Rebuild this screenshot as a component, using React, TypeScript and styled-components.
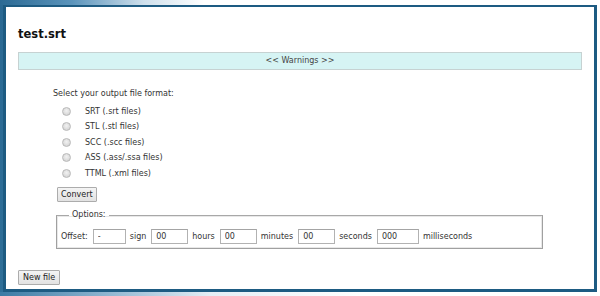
import styled, { createGlobalStyle } from 'styled-components';

const GlobalStyle = createGlobalStyle`
  html, body {
    margin: 0;
    padding: 0;
    background: #ffffff;
  }
  * {
    box-sizing: border-box;
  }
`;

const formats = [
  'SRT (.srt files)',
  'STL (.stl files)',
  'SCC (.scc files)',
  'ASS (.ass/.ssa files)',
  'TTML (.xml files)',
];

const offsets = [
  { value: '-', unit: 'sign', width: 33 },
  { value: '00', unit: 'hours', width: 37 },
  { value: '00', unit: 'minutes', width: 37 },
  { value: '00', unit: 'seconds', width: 37 },
  { value: '000', unit: 'milliseconds', width: 42 },
];

const App = () => {
  return (
    <>
      <GlobalStyle />
      <S.Page>
        <S.Panel>
          <S.Title>test.srt</S.Title>
          <S.Warnings>&lt;&lt; Warnings &gt;&gt;</S.Warnings>
          <S.Section>
            <S.Prompt>Select your output file format:</S.Prompt>
            <S.FormatList>
              {formats.map((f) => (
                <S.FormatRow key={f}>
                  <S.Radio type="radio" name="format" />
                  <S.FormatLabel>{f}</S.FormatLabel>
                </S.FormatRow>
              ))}
            </S.FormatList>
            <S.Button>Convert</S.Button>
            <S.Options>
              <S.Legend>Options:</S.Legend>
              <S.OffsetRow>
                <S.Label>Offset:</S.Label>
                {offsets.map((o) => (
                  <S.OffsetItem key={o.unit}>
                    <S.Input $width={o.width} defaultValue={o.value} />
                    <S.Label>{o.unit}</S.Label>
                  </S.OffsetItem>
                ))}
              </S.OffsetRow>
            </S.Options>
          </S.Section>
          <S.NewFile>New file</S.NewFile>
        </S.Panel>
      </S.Page>
    </>
  );
};

export default App;

const S = {
  Page: styled.div`
    width: 600px;
    height: 296px;
    padding: 5px 3px 4px 3px;
    background:
      linear-gradient(90deg, #2b6a94 0%, #5b94bb 12%, #cfe0ec 24%, #ffffff 34%) 0 0 / 100% 5px no-repeat,
      linear-gradient(90deg, #3b7aa4 0%, #8fb6d1 18%, #e4eef5 35%, #ffffff 60%) 0 292px / 100% 4px no-repeat,
      linear-gradient(#2a6993, #2f6f98) 0 0 / 3px 100% no-repeat,
      #ffffff;
  `,

  Panel: styled.div`
    width: 594px;
    height: 287px;
    border: 3px solid #1d5b82;
    border-top-width: 2px;
    background: #ffffff;
    padding: 0 12px;
    display: flex;
    flex-direction: column;
    font-family: 'DejaVu Sans', Verdana, sans-serif;
    font-size: 8px;
    color: #3a3a3a;
  `,

  Title: styled.h1`
    margin: 20px 0 0 0;
    font-size: 11.5px;
    line-height: 14px;
    font-weight: bold;
    color: #111111;
  `,

  Warnings: styled.div`
    margin-top: 11px;
    height: 18px;
    background: #d6f4f4;
    border: 1px solid #c6d2d2;
    text-align: center;
    line-height: 16px;
    color: #444444;
  `,

  Section: styled.div`
    padding-left: 35px;
    display: flex;
    flex-direction: column;
    align-items: flex-start;
  `,

  Prompt: styled.div`
    margin-top: 18px;
    line-height: 12px;
    color: #333333;
  `,

  FormatList: styled.div`
    margin-top: 3.5px;
    padding-left: 9px;
    display: flex;
    flex-direction: column;
  `,

  FormatRow: styled.label`
    height: 15.5px;
    display: flex;
    align-items: center;
  `,

  Radio: styled.input`
    appearance: none;
    margin: 0 14px 0 0;
    width: 9px;
    height: 9px;
    border-radius: 50%;
    border: 1px solid #b9b9b9;
    background: radial-gradient(circle at 50% 40%, #f2f2f2 0%, #d8d8d8 70%, #c9c9c9 100%);
  `,

  FormatLabel: styled.span`
    color: #333333;
  `,

  Button: styled.button`
    margin-top: 6px;
    margin-left: 4px;
    height: 15px;
    padding: 0 3px;
    border: 1px solid #acacac;
    border-radius: 1px;
    background: linear-gradient(#f4f4f4, #e2e2e2);
    font-family: 'DejaVu Sans', Verdana, sans-serif;
    font-size: 8px;
    line-height: 12px;
    color: #222222;
  `,

  Options: styled.fieldset`
    margin: 8px 0 0 3px;
    width: 487px;
    padding: 9px 4px 4px 4px;
    border: 1px solid #a0a0a0;
    border-top-color: #a8a8a8;
    box-shadow: inset 0 0 0 1px #e8e8e8;
  `,

  Legend: styled.legend`
    margin-left: 8px;
    padding: 0 3px;
    line-height: 10px;
    color: #333333;
  `,

  OffsetRow: styled.div`
    display: flex;
    align-items: center;
    height: 15px;
  `,

  OffsetItem: styled.div`
    display: flex;
    align-items: center;
    margin-left: 5px;
    gap: 4px;
  `,

  Label: styled.span`
    color: #333333;
  `,

  Input: styled.input<{ $width: number }>`
    width: ${(p) => p.$width}px;
    height: 15px;
    margin: 0;
    padding: 0 4px;
    border: 1px solid #b2b2b2;
    border-top-color: #a4a4a4;
    font-family: 'DejaVu Sans', Verdana, sans-serif;
    font-size: 8px;
    color: #333333;
    background: #ffffff;
    outline: none;
  `,

  NewFile: styled.button`
    align-self: flex-start;
    margin-top: 21px;
    height: 15px;
    padding: 0 4px;
    border: 1px solid #acacac;
    border-radius: 1px;
    background: linear-gradient(#f4f4f4, #e2e2e2);
    font-family: 'DejaVu Sans', Verdana, sans-serif;
    font-size: 8px;
    line-height: 12px;
    color: #222222;
  `,
};
